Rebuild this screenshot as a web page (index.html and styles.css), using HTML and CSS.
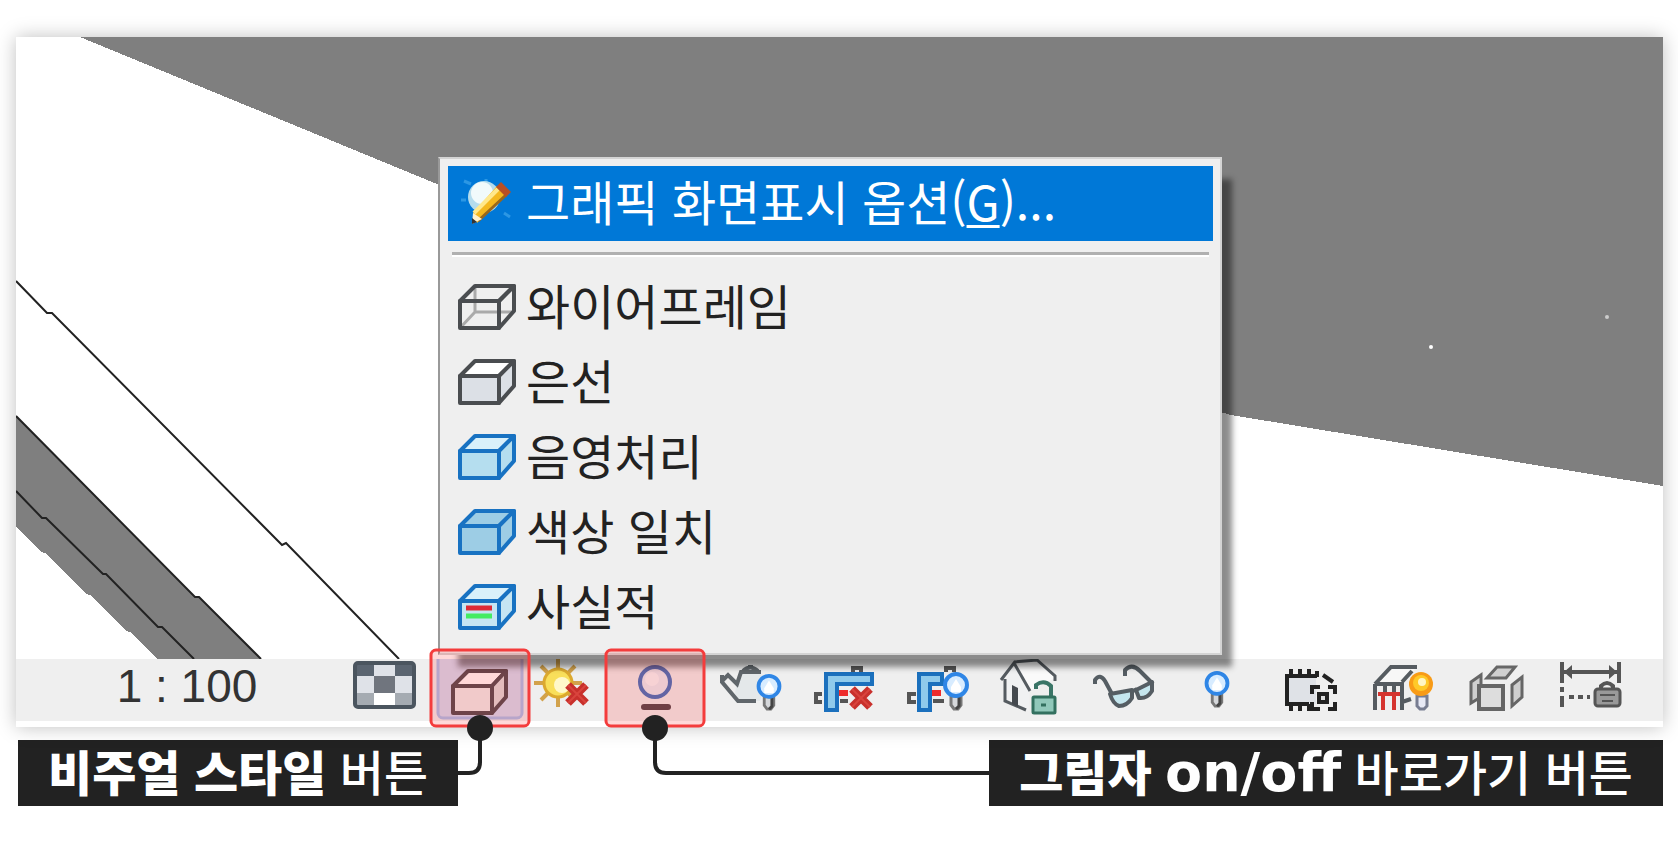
FILE: index.html
```html
<!DOCTYPE html>
<html lang="ko">
<head>
  <meta charset="UTF-8">
  <meta name="viewport" content="width=device-width, initial-scale=1.0">
  <title>비주얼 스타일</title>
  <link rel="stylesheet" href="styles.css">
</head>
<body>
  <!-- shared shapes -->
  <svg class="defs" aria-hidden="true">
    <symbol id="box" viewBox="0 0 58 48">
      <path class="top" d="M2 18 17 3H56L41 18Z"/>
      <path class="side" d="M41 18 56 3V28L41 45Z"/>
      <path class="front" d="M2 18H41V45H2Z"/>
    </symbol>
    <symbol id="bulb" viewBox="0 0 28 42" overflow="visible">
      <path d="M9 25H19V34L16 38H12L9 34Z" fill="#d5d7da" stroke="#777" stroke-width="3"/>
      <path d="M17 26V35L14 38" fill="none" stroke="#444" stroke-width="3"/>
      <circle cx="14" cy="14" r="11" fill="#d8ecff" stroke="#2f86e6" stroke-width="4"/>
      <path d="M9 16 14 8 19 16V21H9Z" fill="#fff"/>
    </symbol>
    <symbol id="cross" viewBox="0 0 28 28">
      <path d="M5 5 23 23M23 5 5 23" fill="none" stroke="#c8302c" stroke-width="8"/>
      <path d="M5 5 23 23M23 5 5 23" fill="none" stroke="#d9443d" stroke-width="2"/>
    </symbol>
  </svg>

  <main class="figure">
    <section class="window">
      <svg class="scene" viewBox="16 37 1647 622" aria-hidden="true">
        <g fill="#7f7f7f" shape-rendering="crispEdges">
          <path d="M80 37H1663V486L1231 415 437 184Z"/>
          <path d="M16 416 195 597H199L261 659H158L130 632 126 631 90 595 86 594 45 553 41 552 16 527Z"/>
        </g>
        <g fill="none" stroke="#222" stroke-width="2">
          <path d="M16 281 47 313H52L282 545 286 543 399 659"/>
          <path d="M16 416 195 597H199L261 659"/>
          <path d="M16 491 42 518H46L103 574H106L158 627H162L194 659"/>
        </g>
        <circle cx="1431" cy="347" r="2" fill="#fff"/>
        <circle cx="1607" cy="317" r="2" fill="#ccc"/>
      </svg>

      <div class="toolbar">
        <button class="scale">1 : 100</button>
        <button aria-label="상세 수준">
          <svg viewBox="338 659 93 62">
            <rect x="355" y="663" width="59" height="44" rx="3" fill="#a5abb2"/>
            <path d="M357 665H374V676H357ZM395 665H412V676H395Z" fill="#5b6571"/>
            <path d="M374 665H395V676H374ZM357 676H374V693H357ZM395 676H412V693H395Z" fill="#dfe2e8"/>
            <path d="M374 676H395V693H374Z" fill="#70757e"/>
            <path d="M374 693H395V706H374Z" fill="#fff"/>
            <rect x="355" y="663" width="59" height="44" rx="3" fill="none" stroke="#4b555f" stroke-width="4"/>
          </svg>
        </button>
        <button aria-label="비주얼 스타일">
          <svg viewBox="431 659 93 62">
            <rect x="438" y="654" width="84" height="64" rx="5" fill="#d2dcf4" stroke="#a5c0ee" stroke-width="3"/>
            <g fill="#eee" stroke="#4a464d" stroke-width="4" stroke-linejoin="round">
              <path d="M453 686 468 671H506L492 686Z" fill="#fff"/>
              <path d="M492 686 506 671V697L492 713Z" fill="#ddd"/>
              <path d="M453 686H492V713H453Z"/>
            </g>
          </svg>
        </button>
        <button aria-label="태양 경로 끄기">
          <svg viewBox="524 659 93 62">
            <path d="M558 659V707M534 683H582M541 666 575 700M575 666 541 700" stroke="#d2a24c" stroke-width="4"/>
            <circle cx="558" cy="683" r="14" fill="#f9df5a" stroke="#dca92e" stroke-width="3"/>
            <circle cx="562" cy="685" r="8" fill="#fff8c9"/>
            <use href="#cross" x="562" y="680" width="30" height="28"/>
          </svg>
        </button>
        <button aria-label="그림자">
          <svg viewBox="617 659 93 62">
            <circle cx="655" cy="682" r="15" fill="#e9eef6" stroke="#3c6fbe" stroke-width="4"/>
            <circle cx="652" cy="679" r="7" fill="#fff" opacity=".6"/>
            <rect x="641" y="704" width="30" height="6" rx="3" fill="#4c4048"/>
          </svg>
        </button>
        <button aria-label="렌더링 대화상자">
          <svg viewBox="710 659 93 62">
            <path d="M741 672H760Q766 684 760 701H739L735 693Q737 680 741 672Z" fill="#e4e8ea"/>
            <path d="M722 681 728 675 737 684 741 672H761M743 671Q750 664 758 671M748 667H753M722 675V682L738 701H756" fill="none" stroke="#60666b" stroke-width="4"/>
            <use href="#bulb" x="755" y="673" width="28" height="40"/>
          </svg>
        </button>
        <button aria-label="자르기 끄기">
          <svg viewBox="803 659 93 62">
            <path d="M822 694H816V702H822M853 672V668H861V672M840 701H848" fill="none" stroke="#555" stroke-width="4"/>
            <path d="M826 674H872V684H837V710H826Z" fill="#8fcaeb" stroke="#1b70bd" stroke-width="4"/>
            <rect x="839" y="690" width="9" height="6" fill="#ee2c2c"/>
            <use href="#cross" x="846" y="684" width="30" height="28"/>
          </svg>
        </button>
        <button aria-label="자르기 영역 표시">
          <svg viewBox="896 659 93 62">
            <path d="M916 694H909V702H916M946 672V668H954V672M933 701H944" fill="none" stroke="#555" stroke-width="4"/>
            <path d="M919 674H942V684H930V710H919Z" fill="#8fcaeb" stroke="#1b70bd" stroke-width="4"/>
            <rect x="932" y="690" width="9" height="6" fill="#ee2c2c"/>
            <use href="#bulb" x="942" y="671" width="28" height="42"/>
          </svg>
        </button>
        <button aria-label="3D 뷰 잠금 해제">
          <svg viewBox="989 659 93 62">
            <path d="M1005 679 1014 664 1029 689V711L1005 701Z" fill="#f0f1f2"/>
            <path d="M1014 664 1037 660 1055 678 1030 691Z" fill="#fafafa"/>
            <path d="M1001 680 1014 663 1030 691M1014 662 1037 660 1055 676V681M1005 679V701L1026 710" fill="none" stroke="#555b60" stroke-width="3"/>
            <path d="M1012 685 1018 688V707L1012 704Z" fill="#454a4f"/>
            <path d="M1036 689V685Q1044 679 1051 686V697" fill="none" stroke="#3a7567" stroke-width="4"/>
            <rect x="1033" y="697" width="22" height="16" rx="1" fill="#91c8ba" stroke="#33705f" stroke-width="3"/>
            <path d="M1041 705H1046" stroke="#33705f" stroke-width="3"/>
          </svg>
        </button>
        <button aria-label="임시 숨기기/분리">
          <svg viewBox="1082 659 93 62">
            <g fill="none" stroke="#555d63" stroke-width="4" stroke-linejoin="round">
              <path d="M1095 684V680Q1100 673 1105 681L1112 694M1125 676V670Q1132 663 1140 671L1153 684"/>
              <path d="M1110 694 1132 690V698Q1127 706 1119 706 1113 704 1110 694Z" fill="#c5e6ee"/>
              <path d="M1136 690 1152 682V691Q1147 699 1139 698Z" fill="#c5e6ee"/>
              <path d="M1131 692 1137 689"/>
            </g>
          </svg>
        </button>
        <button aria-label="숨겨진 요소 표시">
          <svg viewBox="1175 659 93 62">
            <use href="#bulb" x="1203" y="670" width="28" height="40"/>
          </svg>
        </button>
        <button aria-label="임시 뷰 특성">
          <svg viewBox="1268 659 93 62">
            <path d="M1287 676H1316V704H1287Z" fill="#dfe2e7"/>
            <path d="M1317 676H1287V704H1309" fill="none" stroke="#222" stroke-width="4"/>
            <path d="M1291 669V677M1300 669V677M1309 669V677M1317 671V677M1291 704V711M1300 704V711M1309 704V711" stroke="#222" stroke-width="4"/>
            <path d="M1323 675 1333 682M1312 694V687H1320M1328 687H1335V694M1335 702V709H1328M1320 709H1312V702" fill="none" stroke="#222" stroke-width="4"/>
            <rect x="1319" y="694" width="8" height="8" fill="#ddd" stroke="#222" stroke-width="4"/>
          </svg>
        </button>
        <button aria-label="해석 모델 표시">
          <svg viewBox="1361 659 93 62">
            <path d="M1375 682 1391 667H1417L1402 682Z" fill="#f7f7f7"/>
            <path d="M1375 684 1391 667H1417M1375 684H1402V710M1375 684V710M1402 682 1412 671M1385 684V693M1394 684V693M1402 702 1411 699" fill="none" stroke="#555b60" stroke-width="4"/>
            <path d="M1378 694H1400M1383 694V710M1394 694V710" stroke="#d5342f" stroke-width="4"/>
            <path d="M1417 696H1427V706L1424 709H1420L1417 706Z" fill="#e7e9f5" stroke="#777d91" stroke-width="3"/>
            <circle cx="1421" cy="684" r="12" fill="#f89b17"/>
            <circle cx="1421" cy="683" r="8" fill="#ffc928"/>
            <circle cx="1422" cy="682" r="4" fill="#fff6c4"/>
          </svg>
        </button>
        <button aria-label="변위 세트 강조">
          <svg viewBox="1454 659 93 62">
            <g fill="#cfcfcf" stroke="#666" stroke-width="3">
              <path d="M1471 682 1481 675V697L1471 703Z"/>
              <path d="M1487 678 1497 667H1515L1506 678Z"/>
              <path d="M1512 685 1522 677V697L1512 706Z"/>
              <path d="M1479 686H1503V709H1479Z" fill="#ddd" stroke-width="4"/>
            </g>
          </svg>
        </button>
        <button aria-label="구속조건 표시">
          <svg viewBox="1547 659 93 62">
            <g fill="none" stroke="#555" stroke-width="4">
              <path d="M1562 662V683M1562 687V692M1562 696V707M1619 662V683M1562 672H1619"/>
              <path d="M1569 697H1574M1578 697H1583M1587 697H1590"/>
              <path d="M1601 690V686Q1607 680 1613 686V690"/>
            </g>
            <path d="M1564 672 1572 665V679ZM1617 672 1609 665V679Z" fill="#555"/>
            <rect x="1595" y="689" width="25" height="17" rx="3" fill="#999" stroke="#555" stroke-width="3"/>
            <path d="M1600 695H1615M1602 701H1613" stroke="#555" stroke-width="2"/>
          </svg>
        </button>
      </div>

      <div class="menu" role="menu">
        <button class="item active" role="menuitem">
          <svg viewBox="0 0 58 48">
            <path d="M6 2 13 5M28 0V5M52 38 46 34M8 21H3" stroke="#2c97e4" stroke-width="3"/>
            <circle cx="26" cy="18" r="16" fill="#b4dced"/>
            <circle cx="24" cy="14" r="11" fill="#f1fafb"/>
            <path d="M15 34 19 44 49 16 39 7Z" fill="#f4b81f"/>
            <path d="M16 34 40 10" stroke="#ffe88b" stroke-width="4"/>
            <path d="M20 42 48 16" stroke="#99671b" stroke-width="3"/>
            <path d="M38 8 43 3 53 13 48 18Z" fill="#b84f25"/>
            <path d="M15 34 14 45 24 40Z" fill="#fff2ce"/>
            <path d="M14 39V45L19 43Z" fill="#333"/>
          </svg>
          <span>그래픽 화면표시 옵션(<u>G</u>)...</span>
        </button>
        <hr>
        <button class="item" role="menuitem">
          <svg class="wire" viewBox="0 0 58 48">
            <path d="M17 3V29H56M17 29 2 45" fill="none" stroke="#aaa" stroke-width="3"/>
            <use href="#box" width="58" height="48"/>
          </svg>
          <span>와이어프레임</span>
        </button>
        <button class="item" role="menuitem">
          <svg class="hidden-line" viewBox="0 0 58 48"><use href="#box" width="58" height="48"/></svg>
          <span>은선</span>
        </button>
        <button class="item" role="menuitem">
          <svg class="shaded" viewBox="0 0 58 48"><use href="#box" width="58" height="48"/></svg>
          <span>음영처리</span>
        </button>
        <button class="item" role="menuitem">
          <svg class="consistent" viewBox="0 0 58 48"><use href="#box" width="58" height="48"/></svg>
          <span>색상 일치</span>
        </button>
        <button class="item" role="menuitem">
          <svg class="realistic" viewBox="0 0 58 48">
            <use href="#box" width="58" height="48"/>
            <path d="M8 25H34" stroke="#dc2a36" stroke-width="5"/>
            <path d="M8 33H34" stroke="#43ec63" stroke-width="5"/>
          </svg>
          <span>사실적</span>
        </button>
      </div>
    </section>

    <div class="callouts">
      <p><b>비주얼 스타일</b> 버튼</p>
      <p><b>그림자 <span class="latin">on/off</span></b> 바로가기 버튼</p>
    </div>

    <!-- red frames and leader lines -->
    <svg class="marks" viewBox="0 0 1678 842" aria-hidden="true">
      <g fill="#ff3c3c" fill-opacity=".2" stroke="#f43c3c" stroke-width="3">
        <rect x="431" y="650" width="98" height="76" rx="5"/>
        <rect x="606" y="650" width="98" height="76" rx="5"/>
      </g>
      <path d="M480 728V762Q480 773 469 773H457M655 728V762Q655 773 666 773H991" fill="none" stroke="#222" stroke-width="4"/>
      <circle cx="480" cy="728" r="13" fill="#222"/>
      <circle cx="655" cy="728" r="13" fill="#222"/>
    </svg>
  </main>
</body>
</html>
```
FILE: styles.css
```css
body {
  margin: 0;
  background-color: #fff;
  font-family: "Noto Sans CJK KR", "Noto Sans", sans-serif;
  font-size: 48px;
  color: #222;
}
button {
  margin: 0;
  padding: 0;
  border: none;
  background: none;
  font: inherit;
  color: inherit;
  cursor: pointer;
}
svg {
  display: block;
}
.defs {
  position: absolute;
  width: 0;
  height: 0;
}
.figure {
  position: relative;
  padding: 37px 15px 36px 16px;
}
.window {
  position: relative;
  padding-bottom: 6px;
  background-color: #fff;
  box-shadow: 0 0 18px rgba(0, 0, 0, 0.25);
}
.scene {
  width: 100%;
}

/* view control bar */
.toolbar {
  display: grid;
  grid-template-columns: 322fr repeat(14, 93fr);
  align-items: center;
  padding-right: 23px;
  background-color: #efefef;
}
.toolbar svg {
  width: 100%;
}
.scale {
  padding: 0 0 8px 20px;
  font-family: "Liberation Sans Narrow", "Liberation Sans", sans-serif;
  font-size: 46px;
  line-height: 50px;
  color: #333;
}

/* visual style menu */
.menu {
  position: absolute;
  top: 120px;
  left: 422px;
  box-sizing: border-box;
  width: 784px;
  padding: 7px 7px 8px 8px;
  border: 2px solid #d4d4d4;
  border-left-color: #999;
  background-color: #efefef;
  box-shadow: 15px 17px 6px -5px rgba(0, 0, 0, 0.45);
}
.item {
  display: flex;
  align-items: center;
  gap: 10px;
  width: 100%;
  height: 75px;
  padding: 0 0 2px 10px;
  line-height: 66px;
  text-align: left;
  white-space: nowrap;
}
.item svg {
  width: 58px;
  height: 48px;
}
.item span {
  padding-bottom: 6px;
}
.active {
  background-color: #0078d7;
  color: #fff;
}
.item u {
  text-decoration-thickness: 3px;
  text-underline-offset: 4px;
}
.menu hr {
  height: 3px;
  margin: 11px 4px 13px;
  border: none;
  border-bottom: 2px solid #fff;
  background-color: #b0b0b0;
}
.top, .side, .front {
  stroke: var(--edge, #4a4d50);
  stroke-width: 4px;
  stroke-linejoin: round;
}
.top {
  fill: var(--lid, inherit);
}
.wire {
  fill: none;
}
.hidden-line {
  --lid: #fff;
  fill: #dce0e6;
}
.shaded {
  --edge: #1872c2;
  --lid: #d9f0fa;
  fill: #b5deef;
}
.consistent {
  --edge: #1872c2;
  fill: #9dcde5;
}
.realistic {
  --edge: #1872c2;
  --lid: #d9f0fa;
  fill: #c5e5f3;
}

/* captions */
.callouts {
  display: flex;
  justify-content: space-between;
  margin-top: 13px;
  padding-left: 2px;
}
.callouts p {
  margin: 0;
  padding: 0 30px 6px;
  background-color: #222;
  color: #fff;
  font-weight: 500;
  line-height: 60px;
  white-space: nowrap;
}
.callouts b {
  font-weight: 900;
}
.latin {
  font-family: "DejaVu Sans", sans-serif;
  font-size: 54px;
  line-height: 54px;
}
.marks {
  position: absolute;
  top: 0;
  left: 0;
  width: 100%;
  pointer-events: none;
}
```
